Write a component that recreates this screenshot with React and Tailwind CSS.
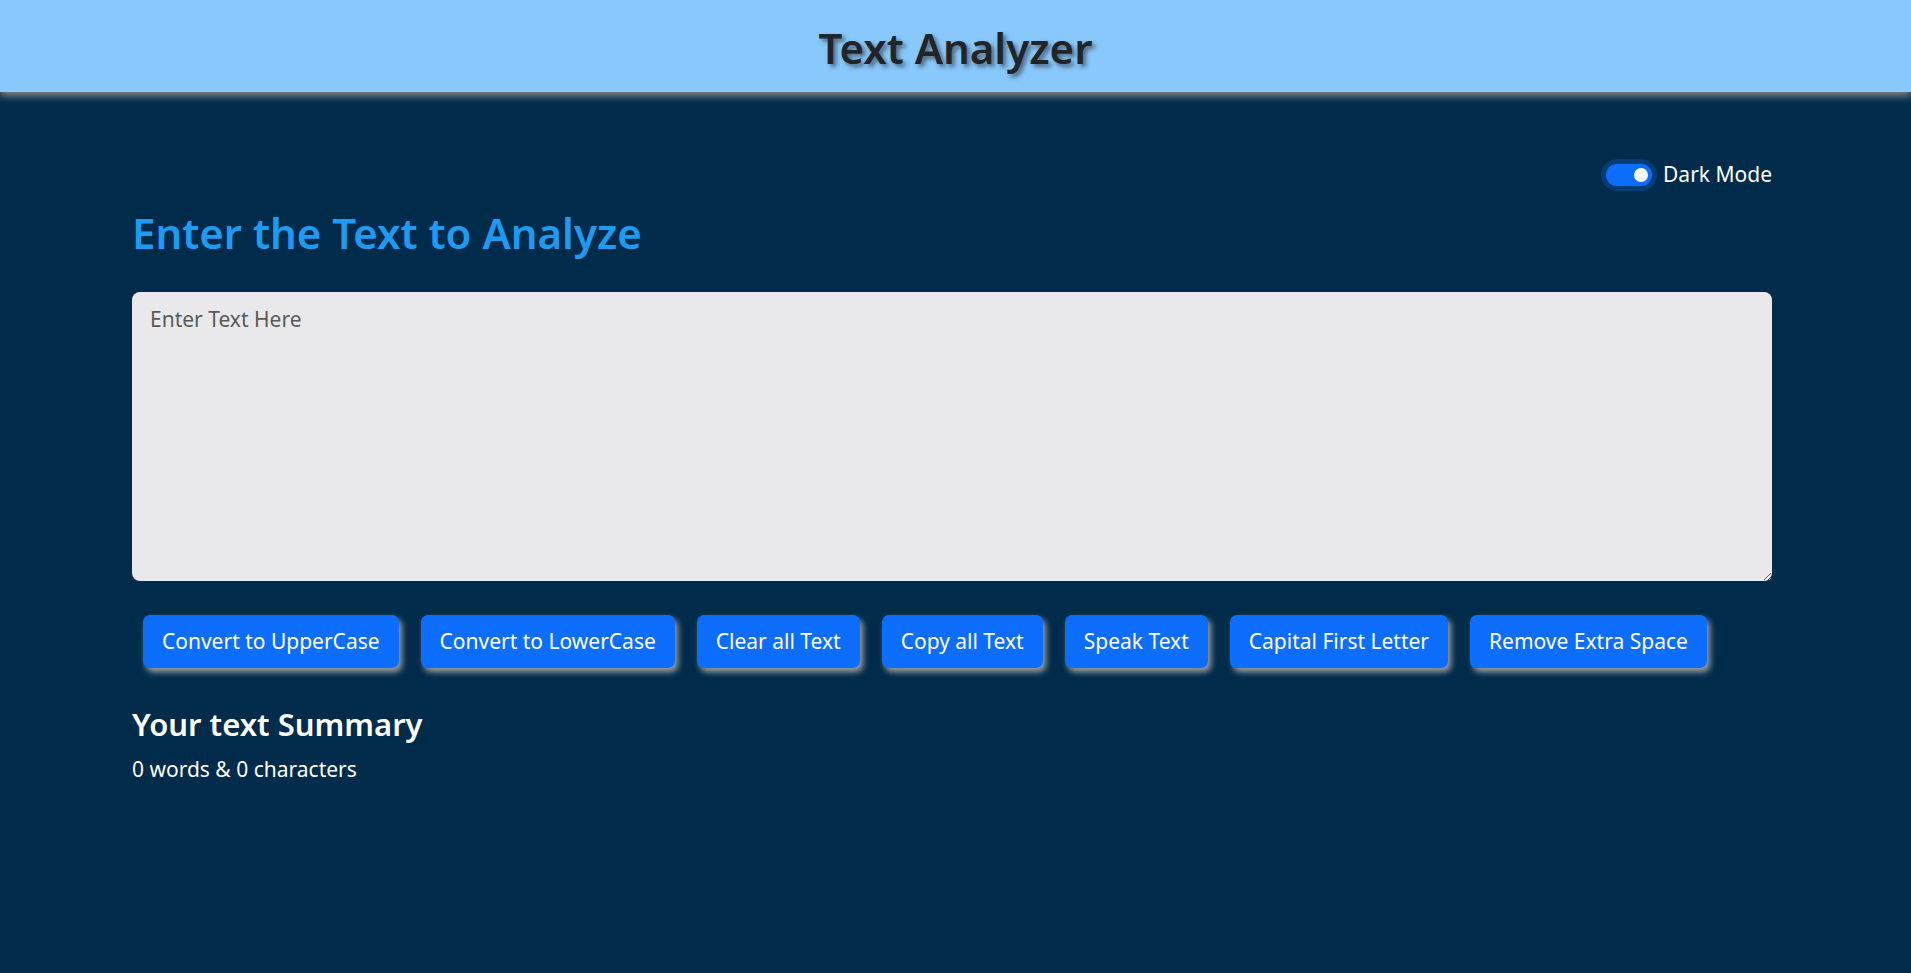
import React, { useState } from 'react';

const buttons = [
  'Convert to UpperCase',
  'Convert to LowerCase',
  'Clear all Text',
  'Copy all Text',
  'Speak Text',
  'Capital First Letter',
  'Remove Extra Space',
];

const App = () => {
  const [text, setText] = useState('');
  const [dark, setDark] = useState(true);

  const words = text.split(/\s+/).filter(w => w.length !== 0).length;

  return (
    <div
      className="min-h-screen bg-[#012b4a]"
      style={{ fontFamily: '"Noto Sans", "Open Sans", sans-serif' }}
    >
      <header className="relative z-10 flex h-[92px] items-center justify-center bg-[#88c8fc] shadow-[0_4px_8px_rgba(140,140,140,0.95)]">
        <h1 className="mt-[4px] text-[42px] font-semibold leading-none text-[#212529] [text-shadow:3px_3px_4px_rgba(40,40,40,0.6)]">
          Text Analyzer
        </h1>
      </header>

      <main className="pl-[132px] pr-[139px] pt-[68px]">
        <div className="flex h-[30px] items-center justify-end">
          <button
            onClick={() => setDark(!dark)}
            className="flex h-[22px] w-[46px] items-center justify-end rounded-full bg-[#0d6efd] px-[4px] shadow-[0_0_0_5px_rgba(13,110,253,0.25)]"
          >
            <span className="h-[14px] w-[14px] rounded-full bg-white" />
          </button>
          <span className="ml-[11px] text-[21px] text-white">Dark Mode</span>
        </div>

        <h2 className="mt-[16px] text-[42px] font-semibold leading-[54px] text-[#1f9af2]">
          Enter the Text to Analyze
        </h2>

        <textarea
          value={text}
          onChange={e => setText(e.target.value)}
          placeholder="Enter Text Here"
          className="mt-[32px] block h-[289px] w-full rounded-[8px] bg-[#e9e9ec] px-[18px] py-[12px] text-[21px] leading-[30px] text-[#212529] outline-none placeholder:text-[#5a5a5a]"
        />

        <div className="mt-[34px] flex">
          {buttons.map(b => (
            <button
              key={b}
              className="mx-[11px] h-[53px] rounded-[7px] bg-[#0d6efd] px-[19px] text-[21px] text-white shadow-[3px_4px_6px_rgba(175,175,175,0.9)]"
            >
              {b}
            </button>
          ))}
        </div>

        <h3 className="mt-[36px] text-[31px] font-semibold leading-[40px] text-white">
          Your text Summary
        </h3>
        <p className="mt-[10px] text-[21px] leading-[30px] text-white">
          {words} words &amp; {text.length} characters
        </p>
      </main>
    </div>
  );
};

export default App;
